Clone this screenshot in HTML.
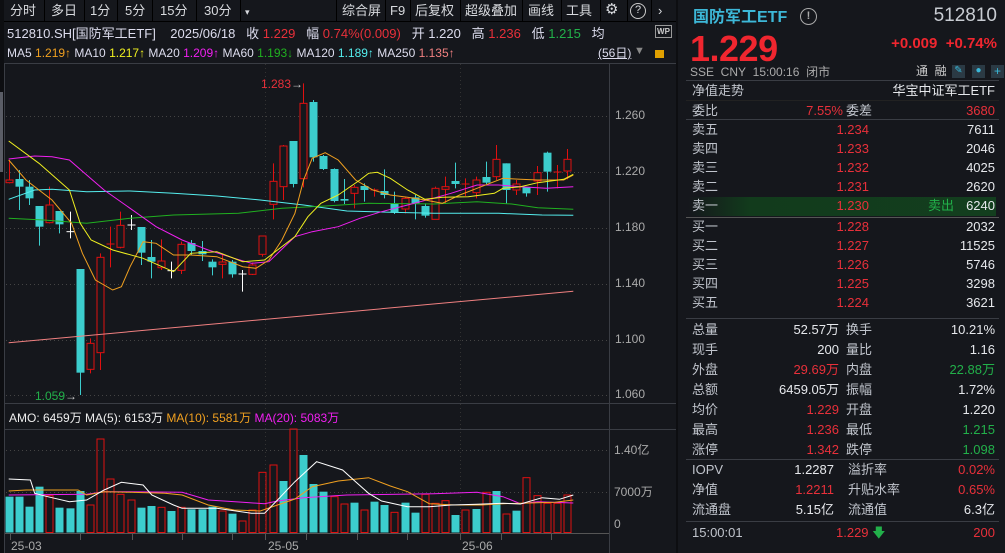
<!DOCTYPE html>
<html><head><meta charset="utf-8"><style>
*{margin:0;padding:0;box-sizing:border-box}
body{width:1005px;height:553px;background:#0d0e11;overflow:hidden;font-family:"Liberation Sans","Noto Sans CJK SC",sans-serif;color:#c8ccd2;position:relative}
.a{position:absolute;white-space:nowrap;line-height:1.2}
#left{position:absolute;left:4px;top:0;width:672px;height:553px;background:#15171c}
#tb{position:absolute;left:4px;top:0;width:672px;height:22px;background:#15171c;border-bottom:1px solid #000}
.t{position:absolute;top:3px;font-size:13px;color:#d8dade;line-height:16px}
.sep{position:absolute;top:0;width:1px;height:22px;background:#000}
#rp{position:absolute;left:678px;top:0;width:327px;height:553px;background:#15171c}
.r{position:absolute;font-size:13px;color:#c0c4cc;white-space:nowrap;line-height:16px}
.red{color:#e8303a}.grn{color:#22b04a}.wh{color:#e6e8ec}
.hl{position:absolute;height:1px;background:#3a3d44;left:8px;right:6px}
</style></head><body>
<div id="left"></div>
<div id="tb"></div>
<div class="t" style="left:10px">分时</div><div class="sep" style="left:44px"></div>
<div class="t" style="left:51px">多日</div><div class="sep" style="left:84px"></div>
<div class="t" style="left:90px">1分</div><div class="sep" style="left:117px"></div>
<div class="t" style="left:125px">5分</div><div class="sep" style="left:152px"></div>
<div class="t" style="left:160px">15分</div><div class="sep" style="left:196px"></div>
<div class="t" style="left:204px">30分</div><div class="sep" style="left:240px"></div>
<div class="t" style="left:245px;font-size:9px;top:4px">▾</div>
<div class="sep" style="left:336px"></div>
<div class="t" style="left:342px">综合屏</div><div class="sep" style="left:385px"></div>
<div class="t" style="left:390px">F9</div><div class="sep" style="left:410px"></div>
<div class="t" style="left:415px">后复权</div><div class="sep" style="left:460px"></div>
<div class="t" style="left:465px">超级叠加</div><div class="sep" style="left:522px"></div>
<div class="t" style="left:528px">画线</div><div class="sep" style="left:561px"></div>
<div class="t" style="left:566px">工具</div><div class="sep" style="left:600px"></div>
<div class="t" style="left:605px;font-size:15px;top:2px">⚙</div><div class="sep" style="left:627px"></div>
<div class="t" style="left:630px;width:16px;height:16px;border:1.5px solid #ccc;border-radius:50%;font-size:11px;text-align:center;line-height:13px;top:3px">?</div><div class="sep" style="left:651px"></div>
<div class="t" style="left:658px">›</div>

<div class="a" style="left:7px;top:26px;font-size:13px;color:#dde">512810.SH[国防军工ETF]&nbsp;&nbsp;&nbsp; 2025/06/18&nbsp;&nbsp; 收 <span class="red">1.229</span>&nbsp;&nbsp; 幅 <span class="red">0.74%(0.009)</span>&nbsp;&nbsp; 开 1.220&nbsp;&nbsp; 高 <span class="red">1.236</span>&nbsp;&nbsp; 低 <span class="grn">1.215</span>&nbsp;&nbsp; 均</div>
<div class="a" style="left:655px;top:25px;width:17px;height:13px;border:1px solid #999;font-size:8px;color:#ccc;text-align:center;line-height:11px;font-weight:bold">WP</div>
<div class="a" style="left:7px;top:46px;font-size:12px;color:#dde">MA5 <span style="color:#f0a020">1.219↑</span> MA10 <span style="color:#f0f020">1.217↑</span> MA20 <span style="color:#f020f0">1.209↑</span> MA60 <span style="color:#20b020">1.193↓</span> MA120 <span style="color:#5ee">1.189↑</span> MA250 <span style="color:#f08080">1.135↑</span></div>
<div class="a" style="left:598px;top:46px;font-size:12px;color:#dde;text-decoration:underline">(56日)</div>
<div class="a" style="left:634px;top:45px;font-size:11px;color:#888">▼</div>
<div class="a" style="left:655px;top:50px;width:9px;height:8px;background:#e0a000"></div>

<svg id="ch" class="a" style="left:0;top:0" width="676" height="553"></svg>

<div class="a" style="left:9px;top:411px;font-size:12px;color:#eee">AMO: 6459万 MA(5): 6153万 <span style="color:#f0a020">MA(10): 5581万</span> <span style="color:#f020f0">MA(20): 5083万</span></div>
<div class="a" style="left:615px;top:108px;font-size:12px;color:#aaa">1.260</div>
<div class="a" style="left:615px;top:164px;font-size:12px;color:#aaa">1.220</div>
<div class="a" style="left:615px;top:220px;font-size:12px;color:#aaa">1.180</div>
<div class="a" style="left:615px;top:276px;font-size:12px;color:#aaa">1.140</div>
<div class="a" style="left:615px;top:332px;font-size:12px;color:#aaa">1.100</div>
<div class="a" style="left:615px;top:387px;font-size:12px;color:#aaa">1.060</div>
<div class="a" style="left:614px;top:443px;font-size:12px;color:#aaa">1.40亿</div>
<div class="a" style="left:614px;top:485px;font-size:12px;color:#aaa">7000万</div>
<div class="a" style="left:614px;top:517px;font-size:12px;color:#aaa">0</div>
<div class="a" style="left:11px;top:539px;font-size:12px;color:#aaa">25-03</div>
<div class="a" style="left:268px;top:539px;font-size:12px;color:#aaa">25-05</div>
<div class="a" style="left:462px;top:539px;font-size:12px;color:#aaa">25-06</div>
<div class="a" style="left:261px;top:77px;font-size:12px;color:#e8303a">1.283<span style="color:#ccc">→</span></div>
<div class="a" style="left:35px;top:389px;font-size:12px;color:#22b04a">1.059<span style="color:#ccc">→</span></div>

<div id="rp">
<div class="a" style="left:15px;top:8px;font-size:16px;font-weight:bold;color:#3db8d8">国防军工ETF</div>
<div class="a" style="left:122px;top:8px;width:17px;height:17px;border:1.5px solid #aaa;border-radius:50%;font-size:11px;text-align:center;line-height:14px;color:#aaa;font-weight:bold">!</div>
<div class="a" style="right:8px;top:5px;font-size:19px;color:#c8ccd2">512810</div>
<div class="a" style="left:12px;top:27px;font-size:36px;font-weight:bold;color:#f0262f;letter-spacing:-0.5px">1.229</div>
<div class="a" style="right:8px;top:35px;font-size:15px;font-weight:bold;color:#f0262f">+0.009&nbsp;&nbsp;+0.74%</div>
<div class="a" style="left:12px;top:65px;font-size:12px;color:#aaa">SSE&nbsp; CNY&nbsp; 15:00:16&nbsp; 闭市</div>
<div class="a" style="left:238px;top:64px;font-size:12px;color:#ccc">通&nbsp; 融</div>
<div class="a" style="left:274px;top:65px;width:13px;height:13px;background:#2b3a44;color:#3ab8d8;font-size:10px;text-align:center">✎</div>
<div class="a" style="left:294px;top:65px;width:13px;height:13px;background:#2b3a44;color:#3ab8d8;font-size:10px;text-align:center">●</div>
<div class="a" style="left:313px;top:65px;width:13px;height:13px;background:#2b3a44;color:#3ab8d8;font-size:12px;text-align:center;line-height:12px">+</div>
<div class="hl" style="top:80px"></div>
<div class="r" style="left:14px;top:83px">净值走势</div><div class="r wh" style="right:10px;top:83px">华宝中证军工ETF</div>
<div class="hl" style="top:100px;background:#222"></div>
<div class="r" style="left:14px;top:103px">委比</div><div class="r red" style="right:162px;top:103px">7.55%</div><div class="r" style="left:168px;top:103px">委差</div><div class="r red" style="right:10px;top:103px">3680</div>
<div class="hl" style="top:119px"></div>
<div class="a" style="left:10px;top:197px;width:308px;height:19px;background:linear-gradient(90deg,#15171c,#123b1c 20%,#133e1e)"></div>
<div class="hl" style="top:217px;background:#555"></div>
<div class="hl" style="top:318px"></div>
<div class="hl" style="top:459px"></div>
<div class="hl" style="top:521px"></div>
<div id="rows"></div>
<div class="r" style="left:14px;top:525px;font-size:13px">15:00:01</div>
<div class="r red" style="left:158px;top:525px">1.229 <span class="grn">🡇</span></div>
<div class="r red" style="right:10px;top:525px">200</div>
</div>

<script>
(function(){
var rows=document.getElementById('rows'),h='';
var ob=[['卖五','1.234','7611'],['卖四','1.233','2046'],['卖三','1.232','4025'],['卖二','1.231','2620'],['卖一','1.230','6240'],['买一','1.228','2032'],['买二','1.227','11525'],['买三','1.226','5746'],['买四','1.225','3298'],['买五','1.224','3621']];
ob.forEach(function(o,i){var y=122+i*19+(i>=5?2:0);
h+='<div class="r" style="left:14px;top:'+y+'px">'+o[0]+'</div><div class="r red" style="right:136px;top:'+y+'px">'+o[1]+'</div><div class="r wh" style="right:10px;top:'+y+'px">'+o[2]+'</div>';});
h+='<div class="r grn" style="left:250px;top:198px">卖出</div>';
var st=[['总量','52.57万','wh','换手','10.21%','wh'],['现手','200','wh','量比','1.16','wh'],['外盘','29.69万','red','内盘','22.88万','grn'],['总额','6459.05万','wh','振幅','1.72%','wh'],['均价','1.229','red','开盘','1.220','wh'],['最高','1.236','red','最低','1.215','grn'],['涨停','1.342','red','跌停','1.098','grn']];
st.forEach(function(o,i){var y=322+i*20;
h+='<div class="r" style="left:14px;top:'+y+'px">'+o[0]+'</div><div class="r '+o[2]+'" style="right:166px;top:'+y+'px">'+o[1]+'</div><div class="r" style="left:168px;top:'+y+'px">'+o[3]+'</div><div class="r '+o[5]+'" style="right:10px;top:'+y+'px">'+o[4]+'</div>';});
var st2=[['IOPV','1.2287','wh','溢折率','0.02%','red'],['净值','1.2211','red','升贴水率','0.65%','red'],['流通盘','5.15亿','wh','流通值','6.3亿','wh']];
st2.forEach(function(o,i){var y=462+i*20;
h+='<div class="r" style="left:14px;top:'+y+'px">'+o[0]+'</div><div class="r '+o[2]+'" style="right:171px;top:'+y+'px">'+o[1]+'</div><div class="r" style="left:170px;top:'+y+'px">'+o[3]+'</div><div class="r '+o[5]+'" style="right:10px;top:'+y+'px">'+o[4]+'</div>';});
rows.innerHTML=h;

var s='';
function L(x1,y1,x2,y2,c,d){s+='<line x1="'+x1+'" y1="'+y1+'" x2="'+x2+'" y2="'+y2+'" stroke="'+c+'" stroke-width="1"'+(d?' stroke-dasharray="1,3"':'')+'/>';}
L(4,63.5,676,63.5,'#3a3d44');
[116,172,228,284,340,395].forEach(function(y){L(6,y+.5,608,y+.5,'#444',1)});
[265.5,460.5].forEach(function(x){L(x,64,x,533,'#333',1)});
L(609.5,64,609.5,553,'#3a3d44');
L(4,403.5,676,403.5,'#3a3d44');L(4,429.5,676,429.5,'#3a3d44');
[450,492].forEach(function(y){L(6,y+.5,608,y+.5,'#444',1)});
L(4,533.5,609,533.5,'#555');
L(4.5,64,4.5,553,'#3a3d44');
[10,80,132,182,232,265,306,357,407,460,501,551].forEach(function(x){L(x+.5,534,x+.5,540,'#555')});
L(676.5,0,676.5,553,'#000');L(677.5,0,677.5,553,'#000');
var C=[[300,308,240,310,'r'],[297,320,270,390,'c'],[320,355,300,375,'c'],[378,440,378,497,'c'],[375,428,320,430,'r'],[393,433,393,460,'c'],[455,455,395,475,'w'],[567,878,567,945,'c'],[790,868,775,880,'r'],[532,818,520,870,'r'],[492,497,440,562,'r'],[436,502,395,505,'r'],[435,435,405,450,'w'],[441,518,441,555,'c'],[531,545,480,595,'c'],[543,563,478,570,'r'],[572,572,545,595,'w'],[493,571,485,582,'r'],[489,513,480,525,'c'],[513,523,483,543,'c'],[545,562,538,586,'c'],[546,553,520,595,'r'],[545,583,540,593,'c'],[582,582,570,635,'w'],[555,583,548,585,'r'],[468,523,468,530,'r'],[304,373,250,418,'r'],[198,320,195,360,'r'],[183,312,183,322,'c'],[70,296,10,322,'r'],[66,232,60,245,'c'],[228,267,225,270,'c'],[267,363,265,367,'c'],[357,362,297,372,'c'],[322,340,315,385,'r'],[318,330,310,365,'c'],[330,332,325,350,'r'],[333,345,268,355,'c'],[372,398,335,402,'c'],[355,387,350,400,'r'],[352,370,345,418,'c'],[378,407,370,413,'c'],[325,418,320,418,'r'],[320,328,290,372,'r'],[303,312,248,325,'c'],[312,313,295,348,'r'],[300,338,290,355,'r'],[291,308,245,312,'c'],[238,290,195,300,'r'],[250,330,250,370,'c'],[312,330,300,345,'r'],[322,340,322,350,'c'],[278,303,258,345,'r'],[218,275,215,335,'c'],[276,280,255,325,'r'],[238,273,207,298,'r']];
var V=[[275,'c'],[275,'c'],[305,'c'],[245,'c'],[272,'r'],[308,'c'],[310,'c'],[258,'c'],[300,'r'],[102,'r'],[222,'r'],[268,'r'],[285,'r'],[308,'c'],[303,'c'],[307,'r'],[318,'c'],[307,'r'],[313,'c'],[313,'c'],[305,'c'],[318,'r'],[326,'c'],[348,'r'],[315,'r'],[202,'r'],[180,'r'],[228,'c'],[72,'r'],[150,'c'],[237,'c'],[260,'c'],[275,'r'],[297,'r'],[293,'c'],[315,'r'],[290,'c'],[300,'c'],[322,'r'],[293,'c'],[323,'c'],[268,'r'],[295,'r'],[287,'r'],[330,'c'],[315,'r'],[312,'c'],[262,'r'],[258,'c'],[327,'r'],[317,'c'],[218,'r'],[272,'r'],[295,'r'],[295,'r'],[270,'r']];
var CY='#3ccdcd',RD='#e01010';
function cy(z){return 80+z/3}
C.forEach(function(c,i){var x=Math.round(8.7+i*10.15)+.5;
 var col=c[4]=='c'?CY:(c[4]=='w'?'#fff':RD);
 L(x,cy(c[2]),x,cy(c[3]),col);
 var t=cy(c[0]),b=cy(c[1]);
 if(c[4]=='w'){L(x-4,t,x+4,t,col);}
 else if(c[4]=='c'){s+='<rect x="'+(x-4)+'" y="'+t+'" width="8" height="'+Math.max(1,b-t)+'" fill="'+CY+'"/>';}
 else{ if(b-t<2) L(x-4,t,x+4,t,RD); else s+='<rect x="'+(x-3.5)+'" y="'+t+'" width="7" height="'+(b-t)+'" fill="#15171c" stroke="'+RD+'"/>';}
});
V.forEach(function(v,i){var x=Math.round(8.7+i*10.15)+.5;var t=405+v[0]/3,b=532.5;
 if(v[1]=='c') s+='<rect x="'+(x-4)+'" y="'+t+'" width="8" height="'+(b-t)+'" fill="'+CY+'"/>';
 else s+='<rect x="'+(x-3.5)+'" y="'+t+'" width="7" height="'+(b-t)+'" fill="none" stroke="'+RD+'"/>';});
function P(pts,c,oy){var d=pts.map(function(p){return (p[0]/2.306).toFixed(1)+','+(oy+p[1]/3).toFixed(1)}).join(' ');s+='<polyline points="'+d+'" fill="none" stroke="'+c+'" stroke-width="1"/>';}
P([[20,788],[1322,634]],'#f08080',80);
P([[20,358],[80,330],[120,328],[200,335],[300,333],[400,340],[500,348],[600,360],[700,375],[800,393],[900,397],[1000,400],[1150,400],[1250,405],[1322,406]],'#5ee',80);
P([[20,415],[100,420],[200,430],[300,415],[400,405],[550,400],[650,385],[750,378],[850,370],[1000,372],[1100,365],[1180,372],[1240,383],[1322,388]],'#20b020',80);
P([[20,237],[80,228],[120,230],[160,240],[200,285],[240,330],[300,385],[360,440],[420,480],[480,510],[540,535],[580,550],[620,545],[680,470],[720,455],[780,440],[830,415],[880,395],[940,375],[990,358],[1040,340],[1100,315],[1150,315],[1200,320],[1260,325],[1322,320]],'#f020f0',80);
P([[20,240],[60,300],[120,360],[165,430],[190,520],[220,600],[260,630],[280,620],[300,560],[330,485],[360,490],[400,525],[440,525],[500,530],[560,560],[590,565],[620,540],[650,480],[680,400],[700,300],[720,235],[750,218],[780,240],[820,300],[860,330],[900,345],[940,352],[980,360],[1020,370],[1060,345],[1100,325],[1160,295],[1200,298],[1240,300],[1300,300],[1322,285]],'#f0a020',80);
P([[20,183],[90,250],[160,330],[185,430],[210,480],[260,510],[330,535],[400,575],[440,520],[500,515],[560,545],[610,540],[640,510],[680,470],[710,410],[740,370],[780,345],[830,300],[850,280],[870,277],[900,295],[940,330],[980,358],[1020,352],[1080,350],[1140,340],[1160,325],[1200,320],[1240,308],[1300,298],[1322,283]],'#f0f020',80);
P([[20,270],[200,268],[240,260],[300,260],[420,262],[480,285],[560,292],[610,296],[640,288],[700,278],[800,270],[1000,266],[1100,262],[1160,275],[1200,296],[1240,290],[1322,294]],'#f020f0',405);
P([[20,258],[60,255],[180,255],[200,270],[240,260],[300,262],[380,265],[420,270],[480,300],[540,315],[600,318],[640,300],[680,282],[720,245],[780,228],[850,218],[900,243],[940,260],[990,296],[1050,300],[1110,300],[1160,296],[1220,294],[1280,292],[1322,285]],'#f0a020',405);
P([[20,222],[70,225],[80,265],[110,275],[160,290],[200,285],[240,255],[280,232],[330,240],[350,270],[400,300],[420,310],[500,310],[580,325],[610,325],[640,285],[680,230],[730,170],[790,195],[820,230],[850,265],[880,288],[940,305],[990,305],[1040,300],[1100,298],[1160,295],[1200,297],[1250,278],[1290,283],[1322,270]],'#ffffff',405);
s+='<rect x="0" y="0" width="4" height="553" fill="#0d0e11"/><rect x="0" y="92" width="3" height="80" fill="#5a5d66"/>';
document.getElementById('ch').innerHTML=s;
})();
</script>
</body></html>
